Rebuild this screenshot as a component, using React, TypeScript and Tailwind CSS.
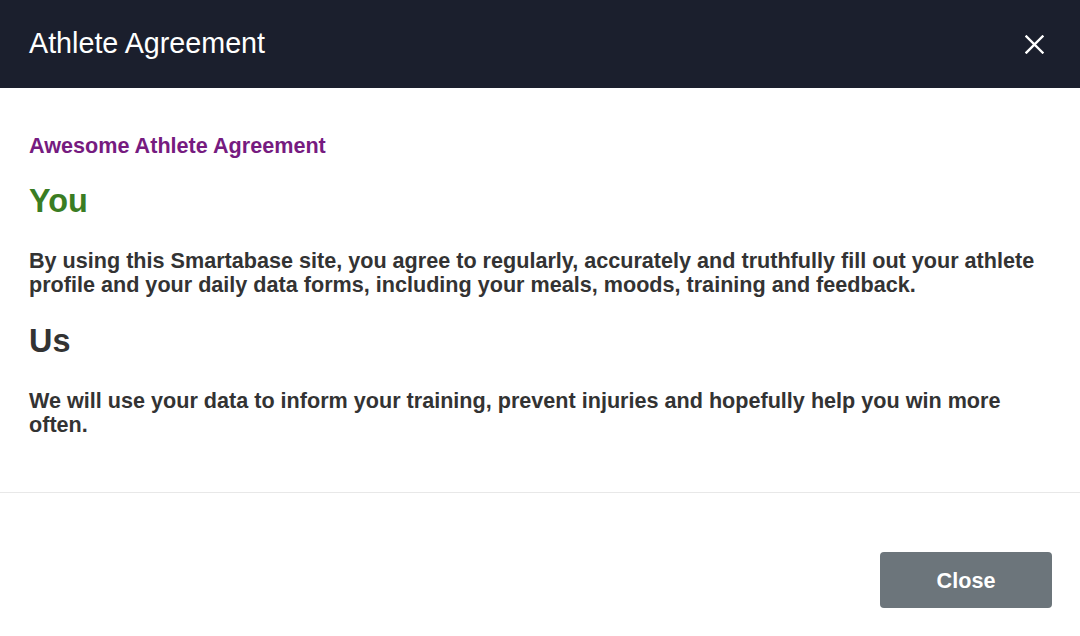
export default function App() {
  return (
    <div className="flex flex-col w-[1080px] h-[636px] bg-white font-['Liberation_Sans',Arial,sans-serif] text-[#333333]">
      {/* Header */}
      <div className="flex items-center justify-between h-[88px] bg-[#1b1f2d] pl-[29px] pr-[36px]">
        <h1 className="text-[28.7px] leading-[32px] text-white font-normal pb-[3px]">Athlete Agreement</h1>
        <button className="text-white" aria-label="Close">
          <svg width="19" height="19" viewBox="0 0 19 19" className="block">
            <path d="M1.5 1.5L17.5 17.5M17.5 1.5L1.5 17.5" stroke="currentColor" strokeWidth="2.4" strokeLinecap="square" />
          </svg>
        </button>
      </div>

      {/* Body */}
      <div className="px-[29px] pt-[46px] pb-[55px] border-b border-[#e8e8e8]">
        <h2 className="text-[21.6px] leading-[24px] font-bold text-[#761b80]">Awesome Athlete Agreement</h2>
        <h3 className="mt-[24px] text-[32.4px] leading-[38px] font-bold text-[#3a7d23]">You</h3>
        <p className="mt-[29px] text-[21.6px] leading-[24px] font-bold">
          By using this Smartabase site, you agree to regularly, accurately and truthfully fill out your athlete profile and your daily data forms, including your meals, moods, training and feedback.
        </p>
        <h3 className="mt-[25px] text-[32.4px] leading-[38px] font-bold">Us</h3>
        <p className="mt-[29px] text-[21.6px] leading-[24px] font-bold">
          We will use your data to inform your training, prevent injuries and hopefully help you win more often.
        </p>
      </div>

      {/* Footer */}
      <div className="flex justify-end px-[28px] pt-[59px]">
        <button className="w-[172px] h-[56px] rounded-[4px] bg-[#6c757b] text-white text-[21.6px] font-bold pt-[3px]">
          Close
        </button>
      </div>
    </div>
  );
}
